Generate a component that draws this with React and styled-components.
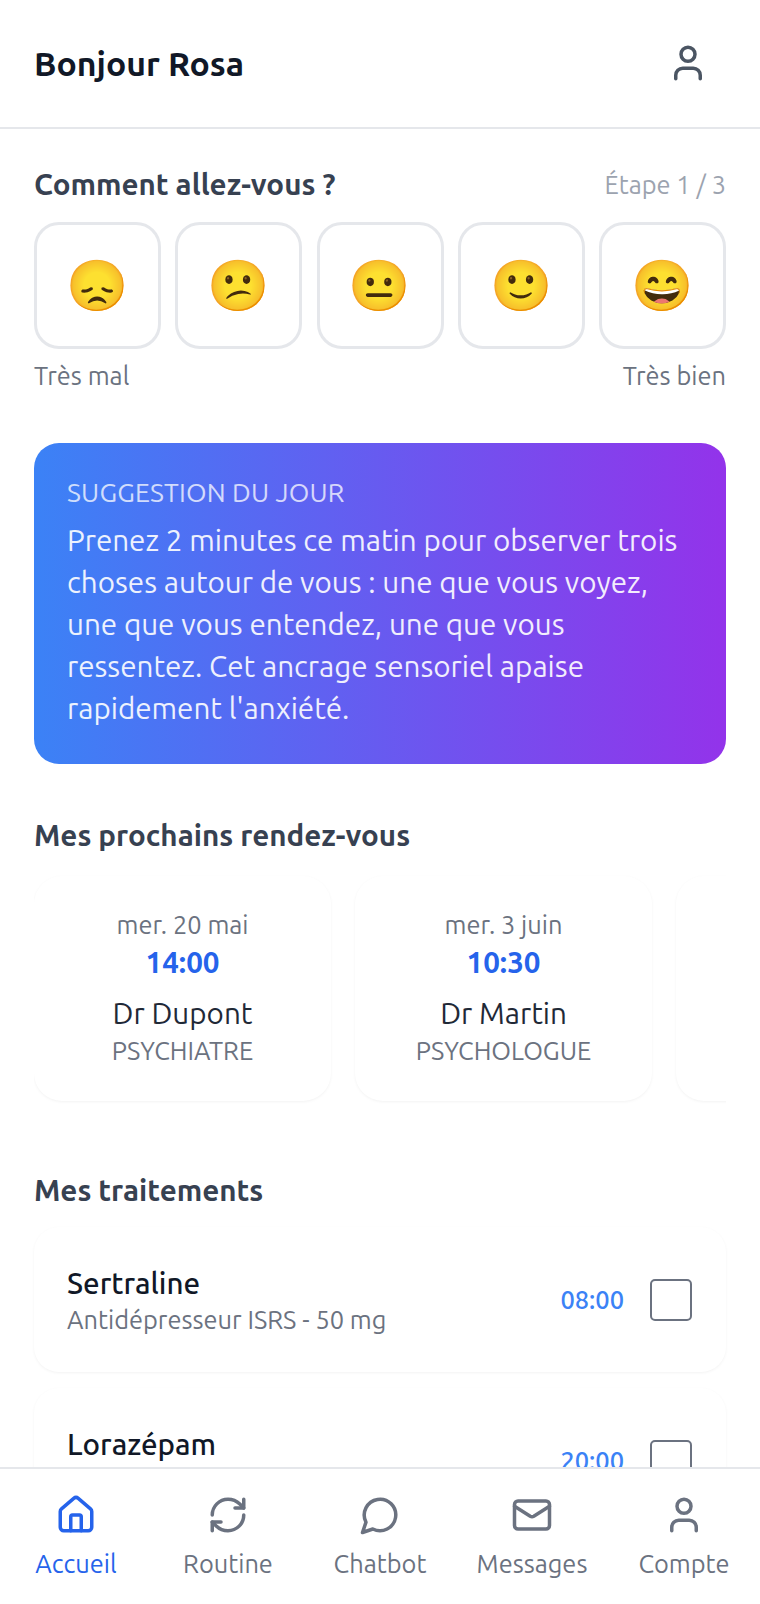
import styled, { createGlobalStyle } from "styled-components";
import { House, RefreshCw, Mail, User } from "lucide-react";

const ChatIcon = ({ size, strokeWidth }) => (
  <svg
    width={size}
    height={size}
    viewBox="0 0 24 24"
    fill="none"
    stroke="currentColor"
    strokeWidth={strokeWidth}
    strokeLinecap="round"
    strokeLinejoin="round"
  >
    <path d="M7.9 20A9 9 0 1 0 4 16.1L2 22Z" />
  </svg>
);

const moods = ["😞", "😕", "😐", "🙂", "😄"];

const appointments = [
  { id: 1, date: "mer. 20 mai", time: "14:00", doctor: "Dr Dupont", role: "Psychiatre" },
  { id: 2, date: "mer. 3 juin", time: "10:30", doctor: "Dr Martin", role: "Psychologue" },
  { id: 3 },
];

const treatments = [
  { name: "Sertraline", detail: "Antidépresseur ISRS - 50 mg", time: "08:00" },
  { name: "Lorazépam", time: "20:00" },
];

const navItems = [
  { label: "Accueil", Icon: House, active: true },
  { label: "Routine", Icon: RefreshCw },
  { label: "Chatbot", Icon: ChatIcon },
  { label: "Messages", Icon: Mail },
  { label: "Compte", Icon: User },
];

const App = () => {
  return (
    <Page>
      <GlobalStyle />
      <Header>
        <Greeting>Bonjour Rosa</Greeting>
        <ProfileButton>
          <User size={42} strokeWidth={2} />
        </ProfileButton>
      </Header>

      <Main>
        <MoodSection>
          <MoodTop>
            <SectionTitle>Comment allez-vous ?</SectionTitle>
            <StepText>Étape 1 / 3</StepText>
          </MoodTop>
          <MoodRow>
            {moods.map((mood) => (
              <MoodButton key={mood}>{mood}</MoodButton>
            ))}
          </MoodRow>
          <MoodLabels>
            <span>Très mal</span>
            <span>Très bien</span>
          </MoodLabels>
        </MoodSection>

        <SuggestionCard>
          <SuggestionLabel>Suggestion du jour</SuggestionLabel>
          <SuggestionText>
            Prenez 2 minutes ce matin pour observer trois choses autour de vous
            : une que vous voyez, une que vous entendez, une que vous
            ressentez. Cet ancrage sensoriel apaise rapidement l'anxiété.
          </SuggestionText>
        </SuggestionCard>

        <SectionTitle>Mes prochains rendez-vous</SectionTitle>
        <AppointmentRow>
          {appointments.map((item) => (
            <AppointmentCard key={item.id}>
              {item.date && (
                <>
                  <AppointmentDate>{item.date}</AppointmentDate>
                  <AppointmentTime>{item.time}</AppointmentTime>
                  <DoctorName>{item.doctor}</DoctorName>
                  <DoctorRole>{item.role}</DoctorRole>
                </>
              )}
            </AppointmentCard>
          ))}
        </AppointmentRow>

        <SectionTitle>Mes traitements</SectionTitle>
        <TreatmentList>
          {treatments.map((item) => (
            <TreatmentCard key={item.name}>
              <div>
                <TreatmentName>{item.name}</TreatmentName>
                <TreatmentDetail>{item.detail}</TreatmentDetail>
              </div>
              <TreatmentSide>
                <TreatmentTime>{item.time}</TreatmentTime>
                <CheckBox />
              </TreatmentSide>
            </TreatmentCard>
          ))}
        </TreatmentList>
      </Main>

      <BottomNav>
        {navItems.map(({ label, Icon, active }) => (
          <NavItem key={label} $active={active}>
            <Icon size={42} strokeWidth={2} />
            <span>{label}</span>
          </NavItem>
        ))}
      </BottomNav>
    </Page>
  );
};

const GlobalStyle = createGlobalStyle`
  html, body {
    margin: 0;
    padding: 0;
    background: #fff;
  }
  * {
    box-sizing: border-box;
  }
`;

const Page = styled.div`
  display: flex;
  flex-direction: column;
  width: 100vw;
  height: 100vh;
  overflow: hidden;
  background: #fff;
  font-family: Ubuntu, "Noto Sans", "Open Sans", sans-serif;
`;

const Header = styled.header`
  flex: none;
  display: flex;
  align-items: center;
  justify-content: space-between;
  height: 129px;
  padding: 0 34px 2px;
  border-bottom: 2px solid #e5e7eb;
`;

const Greeting = styled.h1`
  margin: 0;
  font-size: 33.8px;
  font-weight: 600;
  color: #111827;
`;

const ProfileButton = styled.div`
  display: flex;
  margin-right: 17px;
  color: #4b5563;
`;

const Main = styled.main`
  flex: 1;
  min-height: 0;
  overflow: hidden;
  padding: 36px 34px 0;
`;

const MoodSection = styled.section`
  margin-bottom: 52px;
`;

const MoodTop = styled.div`
  display: flex;
  align-items: center;
  justify-content: space-between;
  margin-bottom: 19px;
`;

const SectionTitle = styled.h2`
  margin: 0;
  font-size: 29.6px;
  line-height: 38px;
  font-weight: 600;
  color: #374151;
`;

const StepText = styled.span`
  font-size: 25.4px;
  color: #9ca3af;
`;

const MoodRow = styled.div`
  display: grid;
  grid-template-columns: repeat(5, 127px);
  justify-content: space-between;
`;

const MoodButton = styled.div`
  display: flex;
  align-items: center;
  justify-content: center;
  height: 127px;
  border: 3px solid #e5e7eb;
  border-radius: 25px;
  font-size: 50px;
  font-family: "Noto Color Emoji", sans-serif;
`;

const MoodLabels = styled.div`
  display: flex;
  justify-content: space-between;
  margin-top: 12px;
  font-size: 25.4px;
  line-height: 30px;
  color: #6b7280;
`;

const SuggestionCard = styled.section`
  padding: 30px 34px 35px 33px;
  margin-bottom: 52px;
  border-radius: 25px;
  color: #fff;
  background: linear-gradient(90deg, #3b82f6, #9333ea);
`;

const SuggestionLabel = styled.div`
  font-size: 26.5px;
  line-height: 38px;
  letter-spacing: 0.2px;
  text-transform: uppercase;
  opacity: 0.75;
`;

const SuggestionText = styled.p`
  margin: 8px 0 0;
  font-size: 29.6px;
  line-height: 42px;
  opacity: 0.9;
`;

const AppointmentRow = styled.div`
  display: flex;
  gap: 24px;
  margin-top: 18px;
  margin-bottom: 66px;
  overflow: hidden;
  padding: 4px 0;
`;

const AppointmentCard = styled.article`
  flex: 0 0 297px;
  height: 225px;
  padding-top: 33px;
  border-radius: 28px;
  text-align: center;
  background: #fff;
  box-shadow: 0 1px 3px rgba(0, 0, 0, 0.05);
`;

const AppointmentDate = styled.div`
  font-size: 25.4px;
  line-height: 32px;
  color: #6b7280;
`;

const AppointmentTime = styled.div`
  margin-top: 2px;
  font-size: 29.6px;
  line-height: 38px;
  font-weight: 600;
  color: #2563eb;
`;

const DoctorName = styled.div`
  margin-top: 13px;
  font-size: 29.6px;
  line-height: 38px;
  color: #1f2937;
`;

const DoctorRole = styled.div`
  font-size: 25.4px;
  line-height: 38px;
  text-transform: uppercase;
  color: #6b7280;
`;

const TreatmentList = styled.div`
  display: flex;
  flex-direction: column;
  gap: 16px;
  margin-top: 18px;
`;

const TreatmentCard = styled.article`
  flex: none;
  display: flex;
  align-items: center;
  justify-content: space-between;
  height: 145px;
  padding: 0 34px 0 33px;
  border-radius: 25px;
  background: #fff;
  box-shadow: 0 1px 3px rgba(0, 0, 0, 0.05);
`;

const TreatmentName = styled.div`
  font-size: 29.6px;
  line-height: 40px;
  font-weight: 500;
  color: #111827;
`;

const TreatmentDetail = styled.div`
  min-height: 34px;
  font-size: 25.4px;
  line-height: 34px;
  color: #6b7280;
`;

const TreatmentSide = styled.div`
  display: flex;
  align-items: center;
  gap: 26px;
`;

const TreatmentTime = styled.span`
  font-size: 25.4px;
  font-weight: 500;
  color: #3b82f6;
`;

const CheckBox = styled.span`
  width: 42px;
  height: 42px;
  border: 2px solid #6b7280;
  border-radius: 5px;
  background: #fff;
`;

const BottomNav = styled.nav`
  flex: none;
  display: grid;
  grid-template-columns: repeat(5, 1fr);
  height: 137px;
  padding-top: 25px;
  border-top: 2px solid #e5e7eb;
  background: #fff;
`;

const NavItem = styled.div`
  display: flex;
  flex-direction: column;
  align-items: center;
  gap: 13px;
  font-size: 25.4px;
  line-height: 30px;
  color: ${(props) => (props.$active ? "#2563eb" : "#6b7280")};
`;

export default App;
